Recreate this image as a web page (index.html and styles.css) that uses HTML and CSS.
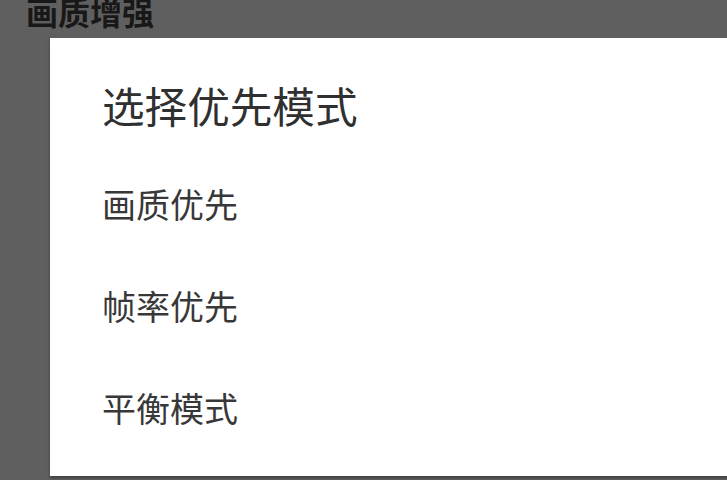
FILE: index.html
```html
<!DOCTYPE html>
<html lang="zh-CN">
<head>
<meta charset="utf-8">
<link rel="stylesheet" href="styles.css">
</head>
<body>
<div class="page">
  <div class="page-header">画质增强</div>
  <div class="dialog">
    <div class="dialog-title">选择优先模式</div>
    <ul class="options">
      <li class="option">画质优先</li>
      <li class="option">帧率优先</li>
      <li class="option">平衡模式</li>
    </ul>
  </div>
</div>
</body>
</html>
```
FILE: styles.css
```css
html, body {
  margin: 0;
  padding: 0;
  width: 727px;
  height: 480px;
  overflow: hidden;
  background: #5f5f5f;
  font-family: "Noto Sans CJK SC", "Noto Sans", sans-serif;
}
.page {
  width: 727px;
  height: 480px;
  overflow: hidden;
}
.page-header {
  height: 38px;
  line-height: 22px;
  padding-left: 26px;
  font-size: 32px;
  font-weight: 700;
  color: #181818;
  white-space: nowrap;
}
.dialog {
  margin-left: 50px;
  width: 720px;
  height: 438px;
  background: #ffffff;
  box-shadow: 0 2px 3px rgba(0, 0, 0, 0.35);
  padding-left: 52px;
  box-sizing: border-box;
}
.dialog-title {
  padding-top: 37px;
  height: 60px;
  line-height: 60px;
  font-size: 42.6px;
  color: #303030;
  white-space: nowrap;
}
.options {
  list-style: none;
  margin: 18px 0 0 0;
  padding: 0;
}
.option {
  height: 102px;
  line-height: 102px;
  font-size: 34px;
  color: #383838;
  white-space: nowrap;
}
```
